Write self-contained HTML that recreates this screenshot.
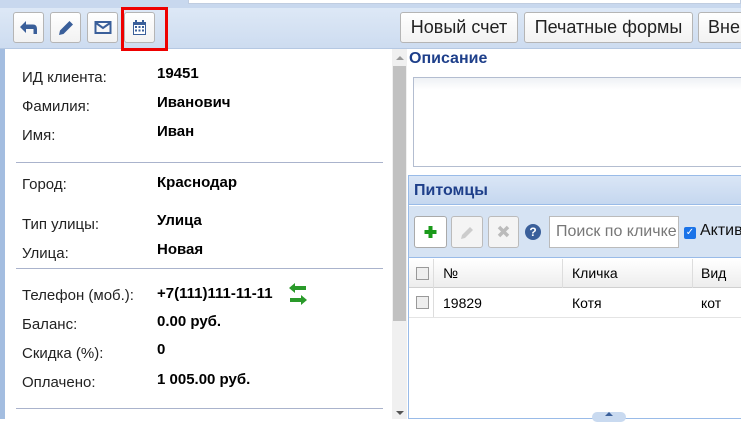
<!DOCTYPE html>
<html><head><meta charset="utf-8"><style>
*{margin:0;padding:0;box-sizing:border-box}
body{width:741px;height:419px;overflow:hidden;background:#fff;font-family:"Liberation Sans",sans-serif;position:relative;font-size:14px;color:#000}
.a{position:absolute}
.btn{position:absolute;top:12px;height:31px;border:1px solid #b5b5b5;border-radius:3px;background:linear-gradient(#fff,#f2f2f2);}
.tb{position:absolute;border:1px solid #b5b5b5;border-radius:3px;background:linear-gradient(#fff,#f2f2f2);font-size:18px;color:#222;text-align:center;line-height:29px;top:12px;height:31px;white-space:nowrap}
.l{position:absolute;left:22px;font-size:15px;color:#222}
.v{position:absolute;left:157px;font-size:15px;font-weight:bold}
.hr{position:absolute;left:16px;width:367px;height:1px;background:#aab3cc}
</style></head><body>
<div class="a" style="left:0;top:0;width:741px;height:8px;background:#c8d8ee"></div>
<div class="a" style="left:188px;top:0;width:553px;height:4px;background:#fff;border:1px solid #c0cde0;border-top:none"></div>
<div class="a" style="left:0;top:8px;width:741px;height:41px;background:linear-gradient(#dde8f6,#cddcf0);border-bottom:1px solid #b5c8e2"></div>
<div class="btn" style="left:13px;width:31px"><svg width="29" height="29" viewBox="0 0 29 29"><path d="M6 14 L12 8 L12 11.5 L19 11.5 Q23 11.5 23 16 L23 21 L19.5 21 L19.5 16 L12 16 L12 20 Z" fill="#3a5f9a"/></svg></div>
<div class="btn" style="left:50px;width:31px"><svg width="29" height="29" viewBox="0 0 29 29"><path d="M8 22 L9 17.5 L18.5 8 L22 11.5 L12.5 21 Z" fill="#3a5f9a"/></svg></div>
<div class="btn" style="left:87px;width:31px"><svg width="29" height="29" viewBox="0 0 29 29"><rect x="7.5" y="9" width="15" height="11" fill="none" stroke="#3a5f9a" stroke-width="2"/><path d="M8 10 L15 15 L22 10" fill="none" stroke="#3a5f9a" stroke-width="2"/></svg></div>
<div class="btn" style="left:124px;width:31px"><svg width="29" height="29" viewBox="0 0 29 29"><rect x="8" y="9" width="13" height="13" fill="#3a5f9a"/><rect x="9" y="12" width="11" height="9" fill="#fff"/><rect x="10" y="13" width="2" height="2" fill="#3a5f9a"/><rect x="13.5" y="13" width="2" height="2" fill="#3a5f9a"/><rect x="17" y="13" width="2" height="2" fill="#3a5f9a"/><rect x="10" y="16.5" width="2" height="2" fill="#3a5f9a"/><rect x="13.5" y="16.5" width="2" height="2" fill="#3a5f9a"/><rect x="17" y="16.5" width="2" height="2" fill="#3a5f9a"/><rect x="10" y="7" width="2" height="3" fill="#3a5f9a"/><rect x="17" y="7" width="2" height="3" fill="#3a5f9a"/></svg></div>
<div class="a" style="left:121px;top:7px;width:47px;height:44px;border:3px solid #e00"></div>
<div class="tb" style="left:400px;width:118px">Новый счет</div>
<div class="tb" style="left:524px;width:169px">Печатные формы</div>
<div class="tb" style="left:698px;width:60px;text-align:left;padding-left:9px">Вне</div>

<div class="a" style="left:0;top:49px;width:5px;height:370px;background:#a3bde0"></div>
<div class="a" style="left:392px;top:49px;width:15px;height:370px;background:#f0f0f0"></div>
<div class="a" style="left:393px;top:66px;width:13px;height:255px;background:#c1c1c1"></div>
<div class="a" style="left:396px;top:56px;border:4px solid transparent;border-bottom:4px solid #999;border-top:none"></div>
<div class="a" style="left:396px;top:411px;border:4px solid transparent;border-top:4px solid #555;border-bottom:none"></div>

<div class="l" style="top:69px">ИД клиента:</div><div class="v" style="top:65px">19451</div>
<div class="l" style="top:98px">Фамилия:</div><div class="v" style="top:94px">Иванович</div>
<div class="l" style="top:127px">Имя:</div><div class="v" style="top:123px">Иван</div>
<div class="hr" style="top:162px"></div>
<div class="l" style="top:176px">Город:</div><div class="v" style="top:174px">Краснодар</div>
<div class="l" style="top:216px">Тип улицы:</div><div class="v" style="top:212px">Улица</div>
<div class="l" style="top:245px">Улица:</div><div class="v" style="top:241px">Новая</div>
<div class="hr" style="top:268px"></div>
<div class="l" style="top:287px">Телефон (моб.):</div><div class="v" style="top:285px">+7(111)111-11-11</div>
<svg class="a" style="left:287px;top:282px" width="22" height="24" viewBox="0 0 22 24"><path d="M2 6 L8 1 L8 4 L19 4 L19 8 L8 8 L8 11 Z" fill="#2a9a2a"/><path d="M20 18 L14 13 L14 16 L3 16 L3 20 L14 20 L14 23 Z" fill="#2a9a2a"/></svg>
<div class="l" style="top:316px">Баланс:</div><div class="v" style="top:313px">0.00 руб.</div>
<div class="l" style="top:345px">Скидка (%):</div><div class="v" style="top:341px">0</div>
<div class="l" style="top:374px">Оплачено:</div><div class="v" style="top:371px">1 005.00 руб.</div>
<div class="hr" style="top:408px"></div>

<div class="a" style="left:409px;top:50px;font-weight:bold;color:#1e3f8a;font-size:16px">Описание</div>
<div class="a" style="left:413px;top:77px;width:330px;height:90px;border:1px solid #b3bdd0;background:linear-gradient(#eef1f5,#fff 12px)"></div>
<div class="a" style="left:408px;top:175px;width:335px;height:244px;border:1px solid #99bbe8;background:#fff"></div>
<div class="a" style="left:409px;top:176px;width:332px;height:29px;background:linear-gradient(#dae6f6,#c5d7ef);border-bottom:1px solid #99bbe8"></div>
<div class="a" style="left:414px;top:182px;font-weight:bold;color:#1e3f8a;font-size:16px">Питомцы</div>
<div class="a" style="left:409px;top:206px;width:332px;height:52px;background:#d6e3f3;border-bottom:1px solid #99bbe8"></div>
<div class="a" style="left:414px;top:216px;width:33px;height:32px;border:1px solid #aaa;border-radius:3px;background:#fff"><svg width="31" height="30" viewBox="0 0 31 30"><path d="M13.5 9 h4 v4 h4 v4 h-4 v4 h-4 v-4 h-4 v-4 h4 Z" fill="#1a9a1a"/></svg></div>
<div class="a" style="left:451px;top:216px;width:32px;height:32px;border:1px solid #bbb;border-radius:3px;background:#f4f4f4"><svg width="30" height="30" viewBox="0 0 30 30"><path d="M9 22 L10 18 L18 10 L21 13 L13 21 Z" fill="#ccc"/></svg></div>
<div class="a" style="left:488px;top:216px;width:31px;height:32px;border:1px solid #bbb;border-radius:3px;background:#f4f4f4"><svg width="29" height="30" viewBox="0 0 29 30"><path d="M10 10 L19 19 M19 10 L10 19" stroke="#bbb" stroke-width="3.5"/></svg></div>
<div class="a" style="left:525px;top:224px;width:16px;height:16px;border-radius:50%;background:#3a5f9a;color:#fff;font-size:12px;font-weight:bold;text-align:center;line-height:16px">?</div>
<div class="a" style="left:549px;top:216px;width:130px;height:32px;border:1px solid #bbb;background:#fff;color:#777;font-size:16px;line-height:30px;padding-left:6px;white-space:nowrap;overflow:hidden">Поиск по кличке</div>
<div class="a" style="left:684px;top:227px;width:12px;height:12px;background:#1a73e8;border-radius:2px;color:#fff;font-size:10px;line-height:12px;text-align:center">✓</div>
<div class="a" style="left:700px;top:222px;font-size:16px;color:#111">Актив</div>
<div class="a" style="left:409px;top:259px;width:332px;height:29px;background:linear-gradient(#fff,#ededed);border-bottom:1px solid #d0d0d0"></div>
<div class="a" style="left:433px;top:259px;width:1px;height:58px;background:#ddd"></div>
<div class="a" style="left:562px;top:259px;width:1px;height:29px;background:#ddd"></div>
<div class="a" style="left:692px;top:259px;width:1px;height:29px;background:#ddd"></div>
<div class="a" style="left:416px;top:267px;width:13px;height:13px;border:1px solid #999;background:#eee"></div>
<div class="a" style="left:416px;top:296px;width:13px;height:13px;border:1px solid #999;background:#eee"></div>
<div class="a" style="left:443px;top:265px;font-size:14px">№</div>
<div class="a" style="left:572px;top:265px;font-size:14px">Кличка</div>
<div class="a" style="left:701px;top:265px;font-size:14px">Вид</div>
<div class="a" style="left:443px;top:295px;font-size:14px">19829</div>
<div class="a" style="left:572px;top:295px;font-size:14px">Котя</div>
<div class="a" style="left:701px;top:295px;font-size:14px">кот</div>
<div class="a" style="left:409px;top:317px;width:332px;height:1px;background:#e4e4e4"></div>
<div class="a" style="left:592px;top:412px;width:34px;height:10px;border-radius:5px;background:#c9daf0"></div>
<div class="a" style="left:605px;top:412px;border:4px solid transparent;border-bottom:4px solid #3a5f9a;border-top:none"></div>
</body></html>
